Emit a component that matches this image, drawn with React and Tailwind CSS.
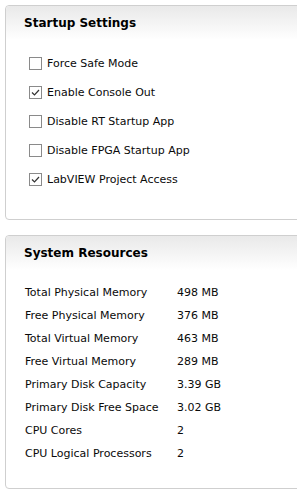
import React from "react";

const font = { fontFamily: '"DejaVu Sans", Verdana, sans-serif' };

function Box({ checked }) {
  return (
    <span className="flex h-[13px] w-[13px] shrink-0 items-center justify-center border border-[#8a8a8a] bg-white">
      {checked && (
        <svg width="11" height="11" viewBox="0 0 11 11">
          <path d="M2 5.5 L4.5 8 L9 3" fill="none" stroke="#333" strokeWidth="1.2" />
        </svg>
      )}
    </span>
  );
}

function Panel({ title, children, h }) {
  return (
    <div className={`w-[300px] rounded-[4px] border border-[#cfcfcf] bg-white ${h}`}>
      <div className="h-[34px] rounded-t-[4px] bg-gradient-to-b from-[#e9e9e9] to-white pl-[18px] pt-[9px] text-[12px] font-bold leading-[16px] text-black">
        {title}
      </div>
      {children}
    </div>
  );
}

export default function App() {
  const checks = [
    ["Force Safe Mode", false],
    ["Enable Console Out", true],
    ["Disable RT Startup App", false],
    ["Disable FPGA Startup App", false],
    ["LabVIEW Project Access", true],
  ];
  const res = [
    ["Total Physical Memory", "498 MB"],
    ["Free Physical Memory", "376 MB"],
    ["Total Virtual Memory", "463 MB"],
    ["Free Virtual Memory", "289 MB"],
    ["Primary Disk Capacity", "3.39 GB"],
    ["Primary Disk Free Space", "3.02 GB"],
    ["CPU Cores", "2"],
    ["CPU Logical Processors", "2"],
  ];
  return (
    <div className="h-[494px] w-[297px] overflow-hidden bg-white text-[11px] text-[#0a0a0a]" style={font}>
      <div className="flex flex-col gap-[15px] pl-[5px] pt-[5px]">
        <Panel title="Startup Settings" h="h-[215px]">
          <div className="flex flex-col pl-[23px] pt-[9px]">
            {checks.map(([l, c]) => (
              <div key={l} className="flex h-[29px] items-center gap-[5px]">
                <Box checked={c} />
                <span className="pt-[1px]">{l}</span>
              </div>
            ))}
          </div>
        </Panel>
        <Panel title="System Resources" h="h-[254px]">
          <div className="flex flex-col pl-[19px] pt-[12px]">
            {res.map(([l, v]) => (
              <div key={l} className="flex h-[23px] items-center">
                <span className="w-[152px]">{l}</span>
                <span>{v}</span>
              </div>
            ))}
          </div>
        </Panel>
      </div>
    </div>
  );
}
